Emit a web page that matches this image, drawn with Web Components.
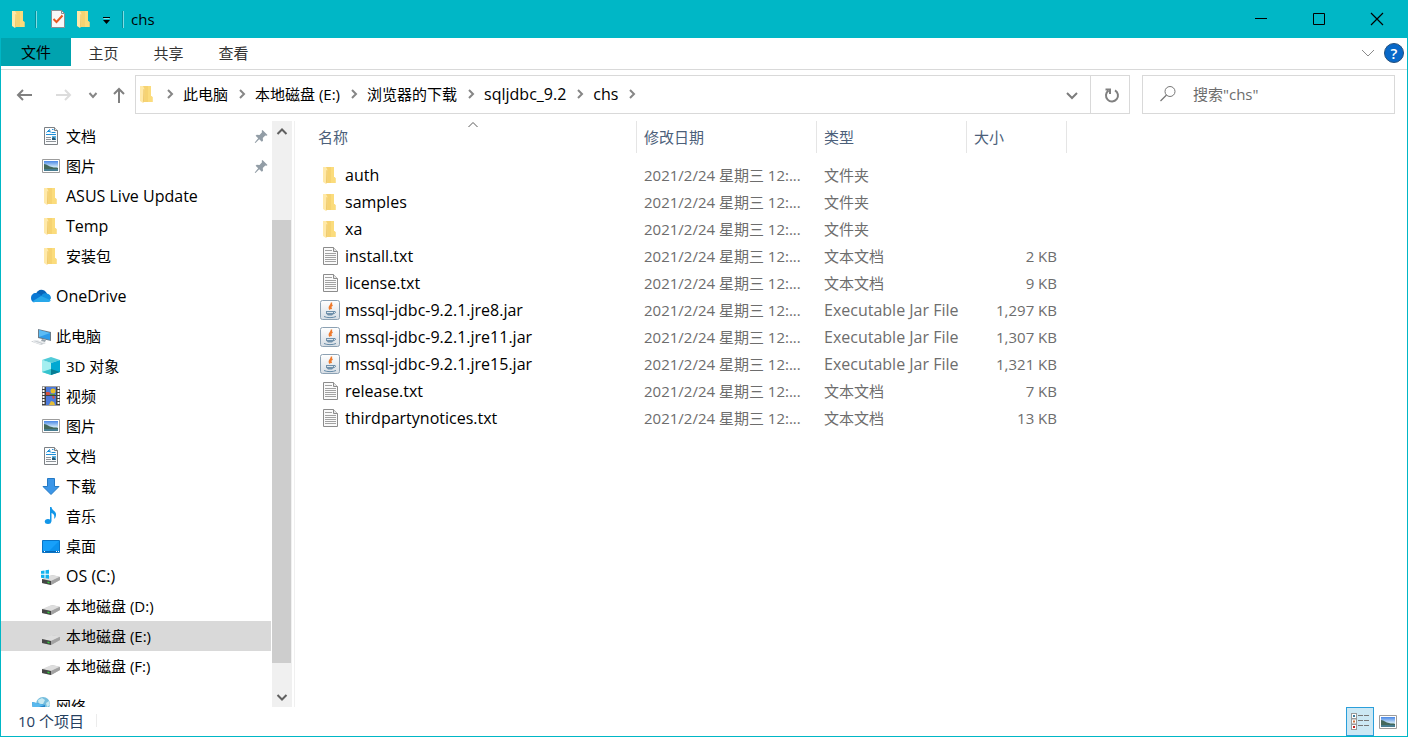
<!DOCTYPE html>
<html lang="zh-CN">
<head>
<meta charset="utf-8">
<title>chs</title>
<style>
  html, body { margin: 0; height: 100%; }
  body {
    font: 15px/20px "Open Sans", "Noto Sans CJK SC", sans-serif;
    color: #000; background: #fff;
    --accent: #00b7c6; --line: #d9d9d9; --latin: 16px;
  }
</style>
</head>
<body>
<explorer-window></explorer-window>

<script>
const chevron = (d, color = '#5c5c5c', w = 2) =>
  `<path d="${d}" fill="none" stroke="${color}" stroke-width="${w}"/>`;

const drive = `
  <path d="M1 14 11 9l8 2v3l-9 5-9-2z" fill="#b9b9b9"/>
  <path d="M1 13 10.500 9l8.500 1.500L10 15z" fill="#dedede"/>
  <path d="M1 13l9 2v4l-9-2z" fill="#454545"/>
  <path d="M10 15l9-4v3l-9 5z" fill="#a2a2a2"/>
  <path d="M6.500 15.500l2 .5v1.500l-2-.5z" fill="#35d13c"/>`;

const ICONS = {
  folder: `
    <path d="M6 2h8v10l1.500 1v5H6z" fill="#f6d372"/>
    <path d="M11 2h3v10l1.500 1v5H11z" fill="#fbdc7c"/>
    <path d="M3 2h3l1.500 3v11L6 19l-3-2z" fill="#ffe9a9"/>
    <path d="M6.500 5l1 .5V16L6 19z" fill="#eec766"/>`,
  text: `
    <path d="M3.500 1.500h10l4 4v13h-14z" fill="#fafafa" stroke="#8c8c8c"/>
    <path d="M13.500 1.500v4h4" fill="#e5e5e5" stroke="#8c8c8c"/>
    <path d="M5 4.500h7M5 7.500h11M5 9.500h11M5 11.500h11M5 13.500h11M5 15.500h11" stroke="#a2a2a2"/>`,
  document: `
    <path d="M3.500 1.500h10l3 3v14h-13z" fill="#fbfcfd" stroke="#7c8084"/>
    <path d="M13.500 1.500v3h3" fill="#e7e9ea" stroke="#7c8084"/>
    <path d="M5.500 6.500l3-3 .8 3M6.500 5.500h2.500M11 3.500h1.500M10.500 6.500h4M5 8.500h10" fill="none" stroke="#1d8fd8"/>
    <path d="M5 11.500h5M5 13.500h5M5 15.500h10" stroke="#8e9499"/>
    <path d="M11 10h4v4h-4z" fill="#59b3e5"/><path d="M11 12l2-1 2 3h-4z" fill="#2a5a74"/>`,
  picture: `
    <defs><linearGradient id="sky" x1="0" y1="0" x2="0" y2="1"><stop offset="0" stop-color="#4987e7"/><stop offset=".6" stop-color="#cfe7f6"/><stop offset="1" stop-color="#8fbdd0"/></linearGradient></defs>
    <path d="M1.500 3.500h17v13h-17z" fill="#fff" stroke="#9c9c9c"/>
    <path d="M3 5h14v10H3z" fill="url(#sky)"/>
    <path d="M3 8c3 0 5 3 8 3 2 1 4 0 6 1v1H3z" fill="#43685c"/>
    <path d="M3 13h14v2H3z" fill="#477d91"/>`,
  onedrive: `
    <path d="M4.500 8.500C6 4 12 1 16 7.500l-4 6z" fill="#0864b9"/>
    <path d="M4.800 7c2.200 0 4.200 1 6.200 3l-8 6.500C1 15.500 0 14 0 12c0-3 2.200-5 4.800-5z" fill="#0a78d4"/>
    <path d="M10 10.500c1-2.500 3-3.800 5.500-3 2.800.3 4.500 2.300 4.500 4.700l-2 3z" fill="#1490df"/>
    <path d="M1.500 15.200L10 10l9.800 4.200c-.5 1.300-1.700 1.900-3.300 1.900H4.200c-1.100 0-2-.3-2.700-.9z" fill="#28a8ea"/>`,
  computer: `
    <path d="M7 3l13 3v9L7 12z" fill="#6b7c8a"/>
    <path d="M8 4l11 3v7L8 11z" fill="#2e9be9"/><path d="M8 4l11 3-11 4z" fill="#5cbcf5"/>
    <path d="M11 13l4 1-1 2-4-1z" fill="#9aa4ab"/>
    <path d="M0 15.500l5-1.500 10 3-5 2z" fill="#c9cdd1"/><path d="M3 15l3-.5 7 2.500M2 15.500l8 2.500" stroke="#edf0f2" fill="none"/>`,
  cube: `
    <path d="M10 1l9 3-9 3-9-3z" fill="#51cbd8"/>
    <path d="M1 4l9 3v12l-9-3z" fill="#6bdbe2"/><path d="M1 4l9 3v6l-9 3z" fill="#a4eff0"/>
    <path d="M19 4l-9 3v12l9-3z" fill="#00a8d2"/><path d="M10 13l9 3-9 3z" fill="#087d94"/><path d="M10 13l-9 3 9 3z" fill="#36c3cd"/>`,
  video: `
    <path d="M1 .5h18v19H1z" fill="#404040"/>
    <path d="M5 1h10v8H5zM5 10h10v9H5z" fill="#4c7adb"/>
    <path d="M2.500 1v18M17.500 1v18" stroke="#fff" stroke-width="2" stroke-dasharray="2 1"/>
    <circle cx="12" cy="5" r="2.500" fill="#e8bd25"/><path d="M5 6h3l2 2-2 1H5zM11 10h2l1 2-2 1z" fill="#d8513d"/>
    <path d="M9 8h5v1H9z" fill="#4a9a42"/><path d="M10 15l3 1 1 3H8z" fill="#e3bd38"/>`,
  download: `<path d="M6.500 2.500h7v8h4.500L10 18.500l-8-8h4.500z" fill="#3c96e8" stroke="#2479c4"/>`,
  music: `<ellipse cx="7" cy="15.500" rx="3.200" ry="2.500" fill="#1296e8"/><path d="M9 1h1.500c.5 4 5 4 4.500 8 0 2-1 3-2 4 1-4-.5-5-2.500-6v8.500H9z" fill="#1296e8"/>`,
  desktop: `<path d="M1.500 4.500h17v12h-17z" fill="#17a0fa" stroke="#0974c6"/><path d="M7 16L18 5v11z" fill="#0b92ee"/><path d="M2 15.500h16" stroke="#0767b5"/><path d="M3 15.500h1M15 15.500h1M17 15.500h1" stroke="#fff"/>`,
  drive,
  osdrive: `${drive}<path d="M0 5l3.500-.6v3.400H0zM4.500 4.300L8 3.700v4.100H4.500zM0 8.800h3.500v3.400L0 11.700zM4.500 8.800H8v4l-3.500-.5z" fill="#12b2ee"/>`,
  network: `
    <circle cx="12" cy="8" r="7" fill="#75bddd"/><path d="M7 4l4-2 3 2-2 4-4 1zM15 7l3-2 1 4-3 2z" fill="#c7e9f1"/>
    <path d="M1 6l13 3v9L2 15z" fill="#2483c5"/><path d="M1 6l13 3-12 4z" fill="#59b9ee"/>`,
  jar: `
    <defs><linearGradient id="tile" x1="0" y1="0" x2="0" y2="1"><stop offset="0" stop-color="#fff"/><stop offset="1" stop-color="#d6dde4"/></linearGradient></defs>
    <rect x=".5" y=".5" width="19" height="19" rx="2" fill="url(#tile)" stroke="#8ca1b3"/>
    <path d="M11.500 2.500c.5 3-4 3.500-1.500 7M12.500 5c-2.500 1.500-2 2.500-1 4" fill="none" stroke="#ee7a2d" stroke-width="1.500"/>
    <path d="M6 11h8v2.500l-2 2H8l-2-2z" fill="#7191ab"/><path d="M14 11.500c2.500-.5 2 2-.8 2.200M4 16.500c3 1.500 9 1.500 12 0" fill="none" stroke="#668ba8"/><path d="M7 12.500h6" stroke="#dce5ec"/>`,
  pin: `<path d="M11.500 4l5 5-1 .8-1.200-.2-2.500 2.500.2 2.700-1.200 1-2.600-2.600L4.500 17l-.8-.5 3.500-4.200-2.600-2.500 1.200-1 2.700.2L11 6.300l-.3-1.500z" fill="#929da6"/>`,
  check: `
    <path d="M3.500 1.500h10l3 3v14h-13z" fill="#f8f8f8" stroke="#8a8f94"/><path d="M13.500 1.500v3h3" fill="none" stroke="#8a8f94"/>
    <path d="M5.500 10l3 3L14.500 6.500" fill="none" stroke="#e9581f" stroke-width="2"/>`,
  menu: `<path d="M7 8.500h7" stroke="#000"/><path d="M7 11h7l-3.500 4z" fill="#000"/><path d="M7.500 9.500h6" stroke="#8adfe6"/>`,
  min: `<path d="M4 9.500h12" stroke="#000"/>`,
  max: `<path d="M4.500 4.500h11v11h-11z" fill="none" stroke="#000"/>`,
  close: `<path d="M4 4l12 12M16 4L4 16" stroke="#000" stroke-width="1.200"/>`,
  back: `<path d="M17 10H3M8 5l-5 5 5 5" fill="none" stroke="#808080" stroke-width="2"/>`,
  forward: `<path d="M3 10h14M12 5l5 5-5 5" fill="none" stroke="#dcdcdc" stroke-width="2"/>`,
  up: `<path d="M10 18V4M5 9l5-5 5 5" fill="none" stroke="#808080" stroke-width="2"/>`,
  recent: chevron('M6.500 8l3.500 4 3.500-4', '#868686'),
  next: chevron('M8 6l4 4-4 4', '#868686', 2),
  dropdown: chevron('M5 8l5 5 5-5', '#7c7c7c'),
  ribbon: chevron('M4 7l6 6 6-6', '#8a8a8a', 1),
  sort: chevron('M5.500 12L10 7.500l4.500 4.500', '#5a5a5a', 1),
  scrollup: chevron('M5.500 12L10 7.500l4.500 4.500', '#606060'),
  scrolldown: chevron('M5.500 8l4.500 4.500L14.500 8', '#606060'),
  refresh: `<path d="M14 5.300a6 6 0 1 1-6.500.3M4.500 4.500h4.500V9" fill="none" stroke="#808080" stroke-width="2"/>`,
  search: `<circle cx="12" cy="7.500" r="5" fill="none" stroke="#777"/><path d="M8.500 11L2.500 17" stroke="#777" stroke-width="1.200"/>`,
  details: `
    <path d="M1 1h6v17H1z" fill="#999"/><path d="M2 2h4v4H2zM2 7.500h4v4H2zM2 13h4v4H2z" fill="#fff"/>
    <path d="M3 3h2v2H3z" fill="#3a7b9d"/><path d="M3 8.500h2v2H3z" fill="#cf7540"/><path d="M3 14h2v2H3z" fill="#c62020"/>
    <path d="M8 3.500h5M14 3.500h5M8 8.500h5M14 8.500h5M8 13.500h5M14 13.500h5" stroke="#777"/>`,
};

// Purely Latin labels are set one step larger than labels with Chinese text.
const latin = text => /^[\x20-\x7e]+$/.test(text) ? 'latin' : '';

const BASE = `<style>
  :host { display: block; box-sizing: border-box; }
  * { box-sizing: border-box; }
  button { font: inherit; color: inherit; background: none; border: 0; padding: 0; margin: 0; display: grid; place-items: center; }
  a { color: inherit; text-decoration: none; }
  .latin { font-size: var(--latin); }
</style>`;

function define(name, render) {
  customElements.define(name, class extends HTMLElement {
    connectedCallback() {
      if (this.shadowRoot) return;
      this.attachShadow({ mode: 'open' }).innerHTML = BASE + render(this);
    }
  });
}

define('ui-icon', el => `
  <style>:host { width: 20px; height: 20px; flex: none; } svg { display: block; }</style>
  <svg width="20" height="20" viewBox="0 0 20 20" aria-hidden="true">${ICONS[el.getAttribute('name')]}</svg>`);

define('title-bar', () => `
  <style>
    :host { display: flex; align-items: center; height: 38px; background: var(--accent); padding: 0 1px 0 8px; }
    .tools { display: flex; align-items: center; flex: 1; }
    .sep { width: 2px; height: 17px; background: #078f9b; border-right: 1px solid #7fdde3; }
    .sep.a { margin: 0 11px 0 6px; }
    .sep.b { margin: 0 7px 0 6px; }
    .gap { margin-right: 6px; }
    .menu { margin-left: 2px; }
    h1 { font: inherit; margin: 0; }
    .ctl { width: 58px; height: 38px; }
  </style>
  <div class="tools">
    <ui-icon name="folder"></ui-icon><span class="sep a"></span>
    <button class="gap" aria-label="属性"><ui-icon name="check"></ui-icon></button>
    <button aria-label="新建文件夹"><ui-icon name="folder"></ui-icon></button>
    <button class="menu" aria-label="自定义快速访问工具栏"><ui-icon name="menu"></ui-icon></button>
    <span class="sep b"></span><h1>chs</h1>
  </div>
  <button class="ctl" aria-label="最小化"><ui-icon name="min"></ui-icon></button>
  <button class="ctl" aria-label="最大化"><ui-icon name="max"></ui-icon></button>
  <button class="ctl" aria-label="关闭"><ui-icon name="close"></ui-icon></button>`);

define('ribbon-tabs', () => `
  <style>
    :host { display: flex; height: 32px; border-bottom: 1px solid var(--line); color: #333; padding-right: 3px; }
    nav { display: flex; flex: 1; }
    button { width: 65px; height: 30px; }
    .file { width: 70px; height: 28px; background: #00a3af; color: #000; }
    .fold { width: 32px; height: 30px; }
    .help { width: 20px; height: 20px; margin-top: 5px; border-radius: 50%; background: #0868c8; border: 1px solid #24507c; color: #fff; font-weight: 600; line-height: 18px; }
  </style>
  <nav><button class="file">文件</button><button>主页</button><button>共享</button><button>查看</button></nav>
  <button class="fold" aria-label="展开功能区"><ui-icon name="ribbon"></ui-icon></button>
  <button class="help" aria-label="帮助">?</button>`);

define('address-bar', () => `
  <style>
    :host { display: flex; height: 51px; padding: 5px 12px 7px 14px; }
    .nav { display: flex; align-items: center; width: 120px; }
    .nav .fwd { margin-left: 18px; }
    .nav .rec { margin-left: 10px; }
    .nav .up { margin-left: 6px; }
    .path { flex: 1; display: flex; border: 1px solid var(--line); padding-left: 1px; min-width: 0; }
    ol { list-style: none; display: flex; align-items: center; margin: 0; padding: 0 0 2px; flex: 1; white-space: nowrap; }
    li { display: flex; align-items: center; }
    li ui-icon { margin: 0 3px 0 4px; }
    li.root ui-icon + ui-icon { margin: 0 3px; }
    .root ui-icon:first-child { margin: 0; }
    .drop { width: 38px; height: 37px; border-right: 1px solid var(--line); }
    .refresh { width: 38px; height: 37px; padding-left: 2px; }
    label { display: flex; align-items: center; gap: 15px; width: 253px; margin-left: 12px; border: 1px solid var(--line); padding: 0 0 2px 15px; }
    input { font: inherit; border: 0; outline: 0; padding: 0; width: 100%; min-width: 0; height: 30px; background: none; }
    input::placeholder { color: #6d6d6d; opacity: 1; }
  </style>
  <div class="nav">
    <button aria-label="后退"><ui-icon name="back"></ui-icon></button>
    <button class="fwd" aria-label="前进" disabled><ui-icon name="forward"></ui-icon></button>
    <button class="rec" aria-label="最近浏览的位置"><ui-icon name="recent"></ui-icon></button>
    <button class="up" aria-label="上移"><ui-icon name="up"></ui-icon></button>
  </div>
  <div class="path">
    <ol>
      <li class="root"><ui-icon name="folder"></ui-icon><ui-icon name="next"></ui-icon></li>
      ${['此电脑', '本地磁盘 (E:)', '浏览器的下载', 'sqljdbc_9.2', 'chs'].map(t => `<li><a href="#" class="${latin(t)}">${t}</a><ui-icon name="next"></ui-icon></li>`).join('')}
    </ol>
    <button class="drop" aria-label="以前的位置"><ui-icon name="dropdown"></ui-icon></button>
    <button class="refresh" aria-label="刷新"><ui-icon name="refresh"></ui-icon></button>
  </div>
  <label aria-label="搜索"><ui-icon name="search"></ui-icon><input type="text" aria-label="搜索" placeholder='搜索"chs"'></label>`);

define('nav-item', el => `
  <style>
    :host { height: 30px; flex: none; }
    :host([top]) { margin-top: 10px; }
    :host([selected]) { background: #d9d9d9; }
    a { display: flex; align-items: center; height: 30px; gap: 5px; padding-left: 40px; white-space: nowrap; }
    :host([top]) a { padding-left: 30px; }
    span { flex: 1; }
  </style>
  <a href="#"><ui-icon name="${el.getAttribute('icon')}"></ui-icon><span class="${latin(el.textContent)}"><slot></slot></span>${el.hasAttribute('pinned') ? '<ui-icon name="pin"></ui-icon>' : ''}</a>`);

const TREE = [
  ['document', '文档', 'pinned'], ['picture', '图片', 'pinned'], ['folder', 'ASUS Live Update'], ['folder', 'Temp'], ['folder', '安装包'],
  ['onedrive', 'OneDrive', 'top'], ['computer', '此电脑', 'top'], ['cube', '3D 对象'], ['video', '视频'], ['picture', '图片'],
  ['document', '文档'], ['download', '下载'], ['music', '音乐'], ['desktop', '桌面'], ['osdrive', 'OS (C:)'],
  ['drive', '本地磁盘 (D:)'], ['drive', '本地磁盘 (E:)', 'selected'], ['drive', '本地磁盘 (F:)'], ['network', '网络', 'top'],
];

define('nav-tree', () => `
  <style>
    :host { display: flex; min-height: 0; border-right: 1px solid #f0f0f0; padding-right: 2px; }
    nav { flex: 1; display: flex; flex-direction: column; overflow: hidden; min-height: 0; }
    .bar { width: 20px; margin-left: 1px; background: #f0f0f0; display: flex; flex-direction: column; padding-right: 1px; }
    .bar button { height: 21px; flex: none; }
    .track { flex: 1; display: flex; flex-direction: column; }
    .before { flex: 78; }
    .thumb { flex: 443; background: #cdcdcd; }
    .after { flex: 23; }
  </style>
  <nav>${TREE.map(([i, t, a = '']) => `<nav-item icon="${i}" ${a}>${t}</nav-item>`).join('')}</nav>
  <div class="bar">
    <button aria-label="向上滚动"><ui-icon name="scrollup"></ui-icon></button>
    <div class="track"><div class="before"></div><div class="thumb"></div><div class="after"></div></div>
    <button aria-label="向下滚动"><ui-icon name="scrolldown"></ui-icon></button>
  </div>`);

const FILES = [
  ['folder', 'auth', '文件夹', ''], ['folder', 'samples', '文件夹', ''], ['folder', 'xa', '文件夹', ''],
  ['text', 'install.txt', '文本文档', '2 KB'], ['text', 'license.txt', '文本文档', '9 KB'],
  ['jar', 'mssql-jdbc-9.2.1.jre8.jar', 'Executable Jar File', '1,297 KB'],
  ['jar', 'mssql-jdbc-9.2.1.jre11.jar', 'Executable Jar File', '1,307 KB'],
  ['jar', 'mssql-jdbc-9.2.1.jre15.jar', 'Executable Jar File', '1,321 KB'],
  ['text', 'release.txt', '文本文档', '7 KB'], ['text', 'thirdpartynotices.txt', '文本文档', '13 KB'],
];

define('file-list', () => `
  <style>
    :host { min-width: 0; overflow: hidden; }
    table { table-layout: fixed; width: 772px; border-collapse: collapse; }
    .name { width: 342px; } .date { width: 180px; } .type { width: 150px; } .size { width: 100px; }
    th { padding: 0 0 8px; font-weight: 400; text-align: left; color: #4c607a; position: relative; }
    th div { height: 32px; line-height: 32px; border-right: 1px solid #e5e5e5; padding-left: 7px; }
    th:first-child div { padding-left: 23px; }
    th ui-icon { position: absolute; top: -6px; left: 168px; }
    td { height: 27px; padding: 0 7px; color: #6d6d6d; white-space: nowrap; overflow: hidden; }
    td:first-child { padding-left: 25px; color: #000; }
    td a { display: flex; align-items: center; gap: 5px; }
    td:last-child { text-align: right; padding-right: 10px; }
  </style>
  <table>
    <colgroup><col class="name"><col class="date"><col class="type"><col class="size"></colgroup>
    <thead><tr><th><div>名称</div><ui-icon name="sort"></ui-icon></th><th><div>修改日期</div></th><th><div>类型</div></th><th><div>大小</div></th></tr></thead>
    <tbody>${FILES.map(([i, n, t, s]) => `<tr><td><a href="#" class="${latin(n)}"><ui-icon name="${i}"></ui-icon>${n}</a></td><td>2021/2/24 星期三 12:...</td><td class="${latin(t)}">${t}</td><td>${s}</td></tr>`).join('')}</tbody>
  </table>`);

define('status-bar', () => `
  <style>
    :host { display: flex; align-items: center; height: 29px; padding: 0 5px 0 17px; color: #26405f; }
    p { margin: 0; padding-bottom: 2px; flex: 1; display: flex; align-items: center; gap: 12px; }
    p::after { content: ""; width: 1px; height: 13px; background: #ececec; }
    button { width: 28px; height: 29px; }
    .on { background: #cce8f4; border: 1px solid #2a9fdb; }
  </style>
  <p>10 个项目</p>
  <button class="on" aria-label="详细信息"><ui-icon name="details"></ui-icon></button>
  <button aria-label="大图标"><ui-icon name="picture"></ui-icon></button>`);

define('explorer-window', () => `
  <style>
    :host { display: flex; flex-direction: column; height: 100vh; border: 1px solid var(--accent); border-top: 0; background: #fff; }
    title-bar, ribbon-tabs, address-bar, status-bar { flex: none; }
    main { flex: 1; display: grid; grid-template-columns: 294px 1fr; grid-template-rows: minmax(0, 1fr); min-height: 0; }
  </style>
  <title-bar></title-bar><ribbon-tabs></ribbon-tabs><address-bar></address-bar>
  <main><nav-tree></nav-tree><file-list></file-list></main>
  <status-bar></status-bar>`);
</script>
</body>
</html>
